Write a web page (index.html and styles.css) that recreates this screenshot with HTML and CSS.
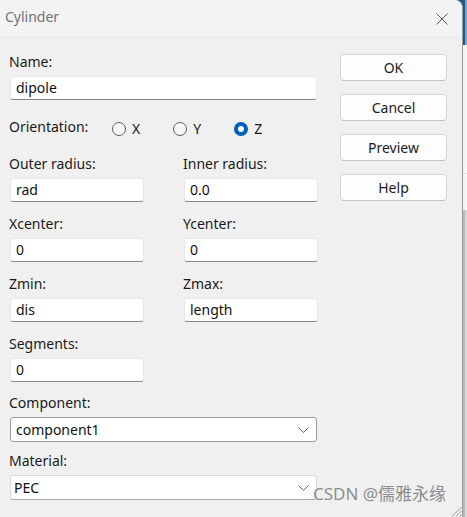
FILE: index.html
```html
<!DOCTYPE html>
<html>
<head>
<meta charset="utf-8">
<link rel="stylesheet" href="styles.css">
</head>
<body>
<div class="screen">
  <div class="dialog">
    <div class="titlebar">
      <span class="title">Cylinder</span>
      <svg class="close" width="12" height="12" viewBox="0 0 12 12"><path d="M0.5 0.5 L11.5 11.5 M11.5 0.5 L0.5 11.5" stroke="#555" stroke-width="1" fill="none"/></svg>
    </div>
    <div class="body">
      <div class="form">
        <div class="field">
          <label class="lbl">Name:</label>
          <div class="input wide">dipole</div>
        </div>
        <div class="orient">
          <span class="lbl orient-lbl">Orientation:</span>
          <div class="radios">
            <span class="radio"><span class="circle"></span><span class="rtext">X</span></span>
            <span class="radio"><span class="circle"></span><span class="rtext">Y</span></span>
            <span class="radio"><span class="circle on"></span><span class="rtext">Z</span></span>
          </div>
        </div>
        <div class="pair first">
          <div class="field"><label class="lbl">Outer radius:</label><div class="input">rad</div></div>
          <div class="field"><label class="lbl">Inner radius:</label><div class="input">0.0</div></div>
        </div>
        <div class="pair">
          <div class="field"><label class="lbl">Xcenter:</label><div class="input">0</div></div>
          <div class="field"><label class="lbl">Ycenter:</label><div class="input">0</div></div>
        </div>
        <div class="pair">
          <div class="field"><label class="lbl">Zmin:</label><div class="input">dis</div></div>
          <div class="field"><label class="lbl">Zmax:</label><div class="input">length</div></div>
        </div>
        <div class="pair">
          <div class="field"><label class="lbl">Segments:</label><div class="input">0</div></div>
        </div>
        <div class="field combo-field comp">
          <label class="lbl">Component:</label>
          <div class="combo dark"><span>component1</span><svg width="11" height="6" viewBox="0 0 11 6"><path d="M0.5 0.5 L5.5 5.5 L10.5 0.5" stroke="#666" fill="none"/></svg></div>
        </div>
        <div class="field combo-field mat">
          <label class="lbl">Material:</label>
          <div class="combo light"><span class="pec">PEC</span><svg width="11" height="6" viewBox="0 0 11 6"><path d="M0.5 0.5 L5.5 5.5 L10.5 0.5" stroke="#666" fill="none"/></svg></div>
        </div>
      </div>
      <div class="buttons">
        <div class="btn">OK</div>
        <div class="btn">Cancel</div>
        <div class="btn">Preview</div>
        <div class="btn">Help</div>
      </div>
    </div>
    <div class="watermark">CSDN @儒雅永缘</div>
    <svg class="grip" width="13" height="13" viewBox="0 0 13 13"><path d="M12.5 3 L3 12.5 M12.5 7 L7 12.5 M12.5 10.5 L10.5 12.5" stroke="#999" stroke-width="1" fill="none"/></svg>
  </div>
  <div class="backdrop"></div>
</div>
</body>
</html>
```

FILE: styles.css
```css
* { box-sizing: border-box; }
html, body { margin: 0; padding: 0; }
body {
  font-family: "Noto Sans", "Noto Sans CJK SC", sans-serif;
  font-size: 14px;
  color: #1b1b1b;
  background: #f0f0f0;
}
.screen {
  display: flex;
  width: 467px;
  height: 517px;
  overflow: hidden;
  background: linear-gradient(to bottom, #1d5a8c 0, #1d5a8c 45px, #f3f3f3 45px, #f3f3f3 173px, #cfcfcf 173px, #cfcfcf 174px, #f3f3f3 174px, #f3f3f3 210px, #b8b8b8 210px);
}
.dialog {
  position: relative;
  width: 463px;
  height: 517px;
  background: #f0f0f0;
  border-right: 1px solid #9a9a9a;
  border-top-right-radius: 8px;
  flex: none;
}
.backdrop {
  flex: 1;
  background: linear-gradient(to right, transparent 0, transparent 2px, rgba(255,255,255,0.45) 2px);
}
.titlebar {
  height: 37px;
  background: #f3f3f3;
  border-bottom: 1px solid #e9e9e9;
  border-top-right-radius: 8px;
  display: flex;
  align-items: center;
  justify-content: space-between;
  padding: 0 14px 0 5px;
}
.title {
  color: #737373;
  font-size: 14px;
  line-height: 20px;
  margin-top: -2px;
}
.close { margin-top: 2px; }
.body {
  display: flex;
  padding: 15px 0 0 10px;
}
.form {
  width: 308px;
  display: flex;
  flex-direction: column;
}
.lbl {
  display: block;
  line-height: 20px;
  height: 20px;
  margin-left: -1px;
  white-space: nowrap;
}
.field {
  display: flex;
  flex-direction: column;
  gap: 4px;
}
.input {
  height: 24px;
  line-height: 22px;
  background: #fff;
  border: 1px solid #e8e8e8;
  border-bottom-color: #888;
  border-radius: 3px;
  padding-left: 5px;
  color: #111;
}
.input.wide { width: 307px; }
.orient {
  display: flex;
  align-items: flex-start;
  margin-top: 17px;
  height: 20px;
}
.orient-lbl { width: 104px; flex: none; }
.radios {
  display: flex;
  gap: 33px;
  margin-top: 2px;
  margin-left: -1px;
}
.radio {
  display: flex;
  align-items: center;
  gap: 6px;
  line-height: 20px;
}
.circle {
  width: 14px;
  height: 14px;
  border-radius: 50%;
  border: 1px solid #5c5c5c;
  background: #f7f7f7;
  flex: none;
}
.circle.on {
  border: 4.5px solid #005fb8;
  background: #fff;
}
.rtext { color: #1b1b1b; }
.pair {
  display: grid;
  grid-template-columns: 134px 134px;
  column-gap: 40px;
  margin-top: 12px;
}
.pair.first { margin-top: 17px; }
.comp { margin-top: 11px; }
.mat { margin-top: 9px; }
.combo {
  width: 307px;
  height: 25px;
  background: #fff;
  border-radius: 3px;
  display: flex;
  align-items: center;
  justify-content: space-between;
  padding: 0 7px 0 5px;
  color: #111;
}
.combo.dark { border: 1px solid #9c9c9c; }
.combo.light { border: 1px solid #d8d8d8; border-bottom-color: #a8a8a8; }
.combo .pec { margin-left: -2px; }
.combo svg { margin-top: 1px; }
.buttons {
  margin-left: 22px;
  margin-top: 2px;
  display: flex;
  flex-direction: column;
  gap: 13px;
}
.btn {
  width: 107px;
  height: 27px;
  line-height: 25px;
  text-align: center;
  background: #fdfdfd;
  border: 1px solid #d6d6d6;
  border-bottom-color: #c4c4c4;
  border-radius: 4px;
  color: #1b1b1b;
}
.watermark {
  position: absolute;
  left: 313px;
  top: 481px;
  font-family: "Noto Sans", "Noto Sans CJK SC", sans-serif;
  font-size: 17px;
  line-height: 26px;
  color: #8e8e8e;
  white-space: nowrap;
}
.grip {
  position: absolute;
  right: 0;
  bottom: 0;
}
```
